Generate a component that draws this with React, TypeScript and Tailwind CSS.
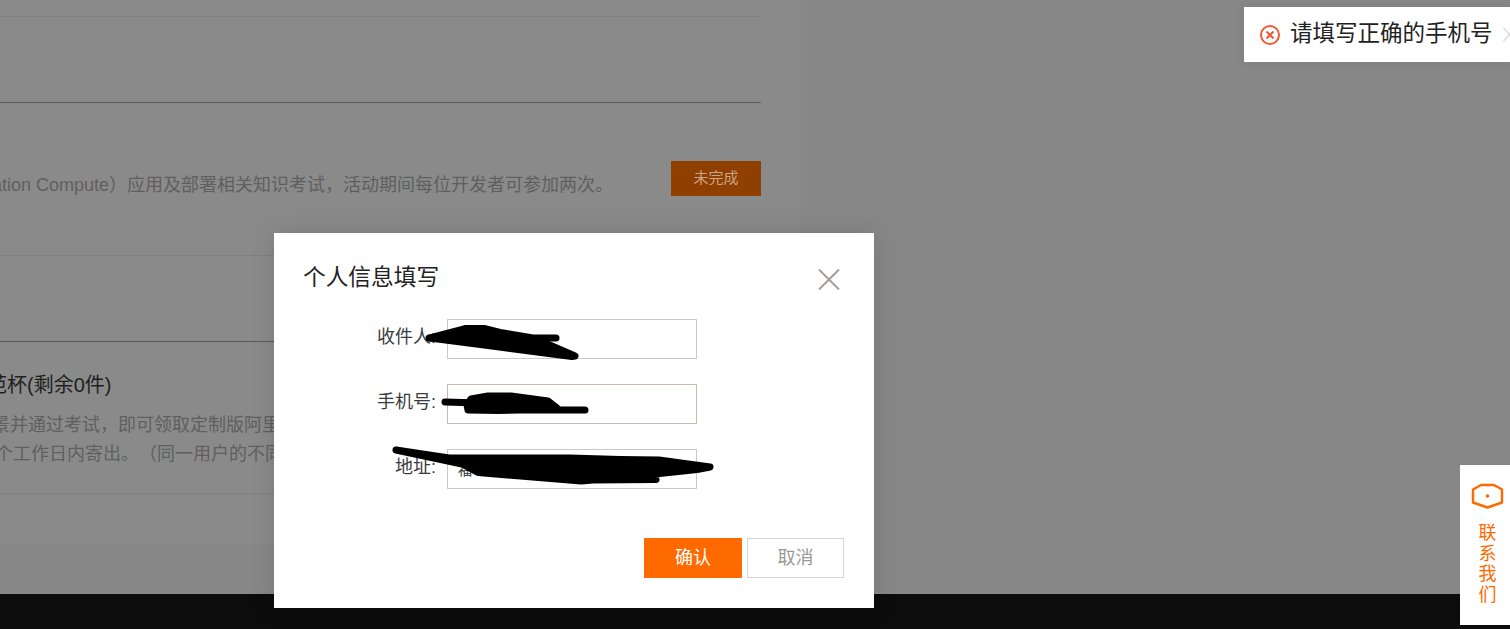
import React from "react";

const font = { fontFamily: '"Liberation Sans", "Noto Sans CJK SC", sans-serif' };

function Field({ label, value, border }: { label: string; value: string; border: string }) {
  return (
    <div className="flex items-center justify-end w-[423px] h-10 gap-[11px]">
      <label className="text-[18px] leading-none text-[#3a3b40] -mt-1 whitespace-nowrap">{label}</label>
      <input readOnly value={value} className={`w-[250px] h-10 border ${border} px-[10px] text-[14px] text-[#333] outline-none`} />
    </div>
  );
}

export default function App() {
  return (
    <div style={font} className="relative w-[1510px] h-[629px] overflow-hidden flex flex-col bg-[#878787]">
      <main className="flex-1 flex min-h-0">
        <section className="w-[801px] h-[544px] shrink-0 bg-[#8a8a8a] pr-10 overflow-hidden">
          <div className="h-[17px] border-b border-[#808080]" />
          <div className="h-[86px] border-b border-[#5a5a5a]" />
          <div className="h-[153px] border-b border-[#808080] pt-[58px] flex items-start justify-between">
            <p className="mt-[11px] text-[18px] leading-[27px] text-[#5f5f5f] whitespace-nowrap -ml-[21px] [text-spacing-trim:space-all]">
              ication Compute）应用及部署相关知识考试，活动期间每位开发者可参加两次。
            </p>
            <button className="w-[90px] h-[35px] bg-[#8f3f00] text-[15px] text-[#c9a486]">未完成</button>
          </div>
          <div className="h-[86px] border-b border-[#5a5a5a]" />
          <div className="h-[152px] border-b border-[#808080] pt-[30px] whitespace-nowrap [text-spacing-trim:space-all]">
            <h3 className="text-[20px] leading-[27px] text-[#1f1f1f] -ml-[13px]">范杯(剩余0件)</h3>
            <p className="mt-[12px] text-[18px] leading-[29px] text-[#5f5f5f] -ml-[8px]">景并通过考试，即可领取定制版阿里云</p>
            <p className="text-[18px] leading-[29px] text-[#5f5f5f] -ml-[5px]">个工作日内寄出。（同一用户的不同</p>
          </div>
        </section>
      </main>
      <footer className="h-[35px] shrink-0 bg-[#0c0c0c]" />

      <div className="absolute left-[274px] top-[233px] w-[600px] h-[375px] bg-white pt-[27px] shadow-[0_0_24px_rgba(0,0,0,0.12)]">
        <div className="flex items-start justify-between pl-[30px] pr-[34px]">
          <h2 className="text-[22.7px] leading-[34px] text-[#222] -ml-px">个人信息填写</h2>
          <svg width="22" height="21" viewBox="0 0 22 21" className="mt-[9px]" fill="none" stroke="#a59c94" strokeWidth="2">
            <path d="M1 0.5 L21 20.5 M21 0.5 L1 20.5" />
          </svg>
        </div>
        <div className="mt-[25px] flex flex-col gap-[25px]">
          <Field label="收件人:" value="" border="border-[#c8c8d0]" />
          <Field label="手机号:" value="" border="border-[#cdb6ae]" />
          <Field label="地址:" value="福" border="border-[#c8c8d0]" />
        </div>
        <div className="mt-[49px] flex justify-end gap-[5px] pr-[30px]">
          <button className="w-[98px] h-10 bg-[#ff6a00] text-white text-[18px]">确认</button>
          <button className="w-[97px] h-10 border border-[#d5d5d5] bg-white text-[#999] text-[18px]">取消</button>
        </div>
      </div>

      <div className="absolute left-[1244px] top-[7px] w-[266px] h-[55px] bg-white flex items-center overflow-hidden pl-4 shadow-[0_0_10px_rgba(0,0,0,0.08)]">
        <svg width="20" height="20" viewBox="0 0 20 20" fill="none" stroke="#ee5a36" strokeWidth="2" className="shrink-0">
          <circle cx="10" cy="10" r="9" />
          <path d="M6.5 6.5 L13.5 13.5 M13.5 6.5 L6.5 13.5" />
        </svg>
        <span className="ml-[10px] text-[22.5px] leading-none text-[#222] whitespace-nowrap">请填写正确的手机号</span>
        <svg width="14" height="16" viewBox="0 0 14 16" fill="none" stroke="#d8d8d8" strokeWidth="1.4" className="ml-[10px] shrink-0">
          <path d="M0.5 1 L13 14 M13 1 L0.5 14" />
        </svg>
      </div>

      <div className="absolute left-[1460px] top-[465px] w-[50px] h-[160px] bg-white flex flex-col items-center pt-[18px]">
        <svg width="33" height="26" viewBox="0 0 33 26" fill="none" stroke="#ff6a00" strokeWidth="2.4" className="ml-[5px]">
          <path d="M2 6.5 L10 2 L23 2 L31 6.5 L31 19.5 L16.5 24.5 L2 19.5 Z" strokeLinejoin="round" />
          <circle cx="16.5" cy="13" r="1.8" fill="#ff6a00" stroke="none" />
        </svg>
        <div className="mt-[14px] w-5 ml-[5px] text-[18px] leading-[20.5px] text-[#ff6a00] text-center">联系我们</div>
      </div>

      <svg viewBox="0 0 1510 629" className="absolute inset-0 w-full h-full pointer-events-none" fill="#000" stroke="#000" strokeWidth="7" strokeLinejoin="round" strokeLinecap="round">
        <path d="M429 338 L556 338" fill="none" />
        <polygon points="466,328.5 484,328.5 500,332.5 530,337.5 545,343 575,356 572,356.5 488,345.5 430,338" />
        <path d="M445 402 L480 403 M500 410 L585 410" fill="none" />
        <polygon points="471,399 488,396 511,396 548,401 557,408 498,410.5 468,410 467,405" />
        <polygon points="396,450 449,458 570,458 620,459.5 659,460 710,467 697,469.5 655,474 656,479.5 593,480 581,481 478,472.5 462,464" />
      </svg>
    </div>
  );
}
